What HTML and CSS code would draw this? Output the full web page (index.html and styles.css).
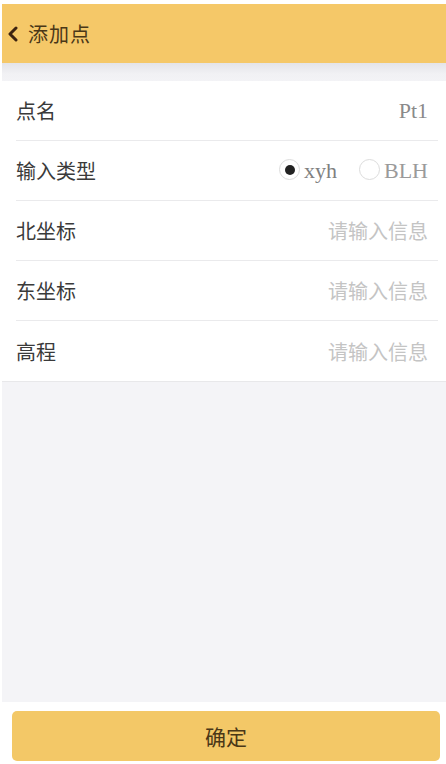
FILE: index.html
```html
<!DOCTYPE html>
<html lang="zh-CN">
<head>
<meta charset="utf-8">
<title>添加点</title>
<link rel="stylesheet" href="styles.css">
</head>
<body>
<div class="app">
  <header class="header">
    <svg class="back" width="12" height="16" viewBox="0 0 12 16"><path d="M9 2 L3 8 L9 14" fill="none" stroke="#3d2410" stroke-width="3" stroke-linecap="round" stroke-linejoin="round"/></svg>
    <span class="title">添加点</span>
  </header>
  <div class="shade"></div>
  <main class="content">
    <section class="card">
      <div class="row">
        <span class="label">点名</span>
        <span class="value">Pt1</span>
      </div>
      <div class="row">
        <span class="label">输入类型</span>
        <span class="radios">
          <span class="radio"><span class="dot checked"></span><span class="rtext">xyh</span></span>
          <span class="radio"><span class="dot"></span><span class="rtext light">BLH</span></span>
        </span>
      </div>
      <div class="row">
        <span class="label">北坐标</span>
        <span class="placeholder">请输入信息</span>
      </div>
      <div class="row">
        <span class="label">东坐标</span>
        <span class="placeholder">请输入信息</span>
      </div>
      <div class="row last">
        <span class="label">高程</span>
        <span class="placeholder">请输入信息</span>
      </div>
    </section>
  </main>
  <footer class="footer">
    <button class="confirm">确定</button>
  </footer>
</div>
</body>
</html>
```
FILE: styles.css
```css
html, body {
  margin: 0;
  padding: 0;
  background: #ffffff;
}
body {
  font-family: "Liberation Serif", "Noto Sans CJK SC", serif;
}
.app {
  height: 764px;
  padding: 4px 0 0 2px;
  box-sizing: border-box;
  display: flex;
  flex-direction: column;
}
.header {
  height: 59px;
  flex: none;
  background: #f5c868;
  display: flex;
  align-items: center;
  padding-left: 5px;
}
.back {
  display: block;
  margin-top: 1px;
}
.title {
  margin-left: 9px;
  font-family: "Noto Sans CJK SC", sans-serif;
  font-size: 20px;
  letter-spacing: 1px;
  color: #4a3717;
}
.shade {
  height: 18px;
  flex: none;
  background: linear-gradient(#e4e4e8, #f1f1f4 60%, #f3f3f6);
}
.content {
  flex: 1;
  background: #f4f4f7;
}
.card {
  background: #ffffff;
  border-bottom: 1px solid #e8e8ea;
}
.row {
  height: 60px;
  box-sizing: border-box;
  margin-left: 14px;
  margin-right: 8px;
  padding-right: 10px;
  display: flex;
  align-items: center;
  justify-content: space-between;
  border-bottom: 1px solid #eaeaec;
}
.row.last {
  border-bottom: none;
}
.label {
  font-family: "Noto Sans CJK SC", sans-serif;
  font-size: 20px;
  color: #3a3a3a;
}
.value {
  font-size: 22px;
  color: #8a8a8a;
}
.placeholder {
  font-family: "Noto Sans CJK SC", sans-serif;
  font-size: 20px;
  color: #c4c4c4;
}
.radios {
  display: flex;
  align-items: center;
  gap: 22px;
}
.radio {
  display: flex;
  align-items: center;
  gap: 4px;
}
.dot {
  width: 21px;
  height: 21px;
  box-sizing: border-box;
  border: 1.5px solid #dcdcdc;
  border-radius: 50%;
  display: flex;
  align-items: center;
  justify-content: center;
  margin-top: -2px;
}
.dot.checked::after {
  content: "";
  width: 10px;
  height: 10px;
  border-radius: 50%;
  background: #222222;
}
.rtext {
  font-size: 22px;
  color: #808080;
}
.rtext.light {
  color: #9a9a9a;
}
.footer {
  height: 62px;
  flex: none;
  background: #ffffff;
  padding: 9px 6px 3px 10px;
  box-sizing: border-box;
  display: flex;
}
.confirm {
  flex: 1;
  border: none;
  border-radius: 5px;
  background: #f3c867;
  font-family: "Noto Sans CJK SC", sans-serif;
  font-size: 21px;
  color: #4a3717;
  padding: 0;
}
```
